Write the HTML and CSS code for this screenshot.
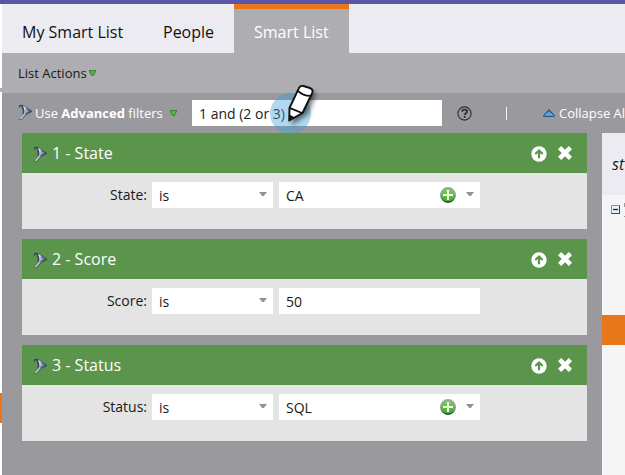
FILE: index.html
```
<!DOCTYPE html>
<html lang="en">
<head>
<meta charset="utf-8">
<title>Smart List</title>
<link rel="stylesheet" href="styles.css">
</head>
<body>
<svg class="defs" aria-hidden="true">
  <linearGradient id="steel" x1="0" y1="0" x2="1" y2=".6"><stop offset="0" stop-color="#8090a8"/><stop offset=".35" stop-color="#e4edf5"/><stop offset=".65" stop-color="#8799b3"/><stop offset="1" stop-color="#33415e"/></linearGradient>
  <linearGradient id="lime" x1="0" y1="0" x2="0" y2="1"><stop offset="0" stop-color="#7fd060"/><stop offset="1" stop-color="#35b515"/></linearGradient>
  <linearGradient id="rim" x1="0" y1="0" x2="0" y2="1"><stop offset="0" stop-color="#a0a2a4"/><stop offset=".7" stop-color="#858b8d"/><stop offset="1" stop-color="#26343f"/></linearGradient>
  <linearGradient id="sky" x1="0" y1="0" x2="0" y2="1"><stop offset="0" stop-color="#287cc4"/><stop offset="1" stop-color="#60baff"/></linearGradient>
  <symbol id="funnel" viewBox="0 0 15 17">
    <path d="M3.500 1C7 2.200 10.500 4.500 14 7.400L8.600 10.300 6.500 12.500 3 16 1.300 15.400 4.700 11.800 5.300 8.500Z" fill="url(#steel)" stroke="#2b3852" stroke-width=".7"/>
    <path d="M1.200 3.500C1.200.5 3.500.5 4.800 3.200 6 6 6 8.500 4.800 9.200" fill="none" stroke="#2b3852" stroke-width="1.100"/>
    <path d="M5.800 10.500 2.300 14.800" stroke="#dce6f1" stroke-width=".9"/>
    <path d="m8 4.500 4.600 3M7.500 9.600l4-1.700" stroke="#30405e" stroke-width=".8"/>
  </symbol>
  <symbol id="down" viewBox="0 0 7 6"><path d="M0 0h7v1.500L4.500 6h-2L0 1.500Z" fill="#3d8430"/><path d="M1 1h5L4.200 4.800H2.800Z" fill="#4fbd30"/></symbol>
  <symbol id="up-circle" viewBox="0 0 16 16"><circle cx="8" cy="8" r="7.700" fill="#fff"/><path d="m8 2.900 4.400 4.400-1.400 1.400-1.900-1.700V12.300H6.900V7L5 8.700 3.600 7.300Z" fill="#5b944b"/></symbol>
  <symbol id="cross" viewBox="0 0 14 14"><path d="m3.200 0 3.800 3.800L10.800 0 14 3.200 10.200 7 14 10.800 10.800 14 7 10.200 3.200 14 0 10.800 3.800 7 0 3.200Z" fill="#fff"/></symbol>
  <symbol id="plus" viewBox="0 0 16 16"><circle cx="8" cy="8" r="7.200" fill="url(#lime)" stroke="url(#rim)" stroke-width="1.500"/><path d="M8 3v10M3 8h10" stroke="#f4fff0" stroke-width="2"/></symbol>
</svg>
<div class="window">
  <div class="gutter"><i class="gutter-line"></i><i class="gutter-mark"></i></div>
  <div class="app">
    <nav class="tabs">
      <a class="tab tab-first">My Smart List</a>
      <a class="tab tab-people">People</a>
      <a class="tab active">Smart List</a>
    </nav>
    <div class="toolbar"><span class="actions">List Actions</span><svg class="down"><use href="#down"/></svg></div>
    <main class="workspace">
      <div class="filterbar">
        <svg class="funnel"><use href="#funnel"/></svg>
        <span class="mode">Use <b>Advanced</b> filters</span>
        <svg class="down"><use href="#down"/></svg>
        <div class="logic">1 and (2 or 3)
          <svg class="cursor" viewBox="0 0 60 58">
            <circle cx="26.500" cy="33.500" r="20.500" fill="#3d9ed9" fill-opacity=".4"/>
            <path d="M28 29 40 9l12 4-8 21-16 11Z" class="shade"/>
            <path d="M25.500 28 34.800 8.300C35.600 6.300 37.200 5.500 39.500 6l6.300 2c2.600.9 3.400 2.700 2.400 5L38.500 33 25.200 40.500Z" fill="#fff" stroke="#111" stroke-width="1.900" stroke-linejoin="round"/>
            <path d="M34 10.800c3 3.200 7.600 5 12.500 5M25.500 27.800 38 33" fill="none" stroke="#111" stroke-width="1.800"/>
            <path d="m25.200 34.500 5.300 2.800-5.300 3.200Z" fill="#111"/>
          </svg>
        </div>
        <svg class="help" viewBox="0 0 15 15"><circle cx="7.500" cy="7.500" r="6.600" fill="none" stroke="#2c2c2e" stroke-width="1.100"/><path d="M5 5.700c.2-1.500 1.200-2 2.600-2 1.500 0 2.500.7 2.500 1.900 0 1.600-2.400 1.700-2.400 3.300M7.700 10v1.700" fill="none" stroke="#2c2c2e" stroke-width="1.800"/></svg>
        <i class="divider"></i>
        <svg class="collapse" viewBox="0 0 12 8"><path d="M6 .7 11.300 6.500v.8H.7v-.8Z" fill="url(#sky)" stroke="#153e68" stroke-width="1"/></svg>
        <span class="collapse-text">Collapse All</span>
      </div>
      <div class="content">
        <div class="cards">
          <section class="card">
            <header><svg class="funnel"><use href="#funnel"/></svg><h2>1 - State</h2><svg class="up"><use href="#up-circle"/></svg><svg class="cross"><use href="#cross"/></svg></header>
            <div class="row"><label>State:</label><div class="field operator"><span>is</span><i class="caret"></i></div><div class="field value"><span>CA</span><svg class="plus"><use href="#plus"/></svg><i class="caret"></i></div></div>
          </section>
          <section class="card">
            <header><svg class="funnel"><use href="#funnel"/></svg><h2>2 - Score</h2><svg class="up"><use href="#up-circle"/></svg><svg class="cross"><use href="#cross"/></svg></header>
            <div class="row"><label>Score:</label><div class="field operator"><span>is</span><i class="caret"></i></div><div class="field value"><span>50</span></div></div>
          </section>
          <section class="card">
            <header><svg class="funnel"><use href="#funnel"/></svg><h2>3 - Status</h2><svg class="up"><use href="#up-circle"/></svg><svg class="cross"><use href="#cross"/></svg></header>
            <div class="row"><label>Status:</label><div class="field operator"><span>is</span><i class="caret"></i></div><div class="field value"><span>SQL</span><svg class="plus"><use href="#plus"/></svg><i class="caret"></i></div></div>
          </section>
        </div>
        <aside class="side">
          <div class="search">st</div>
          <div class="tree">
            <svg class="node" viewBox="0 0 14 17"><path d="M.5 4.500h8v8h-8Z" fill="#e8f0f8" stroke="#7894b5"/><path d="M8.500 4.500v8h-8" fill="none" stroke="#294767"/><path d="M2 8.500h5" stroke="#172c49" stroke-width="1.300"/><path d="M13.500 2v4m0 9v1" stroke="#999"/></svg>
          </div>
          <div class="selected"></div>
        </aside>
      </div>
    </main>
  </div>
</div>
</body>
</html>
```
FILE: styles.css
```
* { box-sizing: border-box; }
body { margin: 0; overflow: hidden; font: 14px "Open Sans", sans-serif; color: #191919; }
svg { display: block; flex: none; }
.defs { width: 0; height: 0; }
.window { display: flex; height: 475px; border-top: 4px solid #5a55a5; overflow: hidden; }
.gutter { width: 2px; flex: none; background: #fff; }
.gutter-line { display: block; height: 4px; margin-top: 84px; background: #aeadb2; }
.gutter-mark { display: block; height: 30px; margin-top: 301px; background: #e8771b; }
.app { width: 623px; flex: none; background: #9a999e; }
.tabs { display: flex; height: 49px; background: #ecebf2; font-size: 16px; }
.tab { flex: none; height: 49px; line-height: 56px; padding-left: 20px; color: #111; white-space: nowrap; }
.tab-first { width: 141px; }
.tab-people { width: 91px; }
.active { width: 115px; border-top: 5px solid #e8771b; background: #aeadb2; color: #fff; line-height: 46px; }
.toolbar { display: flex; align-items: center; height: 40px; padding-left: 16px; background: #aeadb2; font-size: 13px; }
.actions { width: 71px; white-space: nowrap; }
.down { width: 7px; height: 6px; }
.funnel { width: 15px; height: 17px; }
.filterbar { display: flex; align-items: center; height: 40px; padding-left: 16px; color: #fff; white-space: nowrap; }
.filterbar > * { flex: none; }
.filterbar .funnel { margin-top: -2px; }
.mode { width: 135px; margin-left: 2px; font-size: 13px; }
.logic { position: relative; width: 250px; height: 26px; margin-left: 15px; padding-left: 7px; background: #fff; color: #222; line-height: 27px; }
.cursor { position: absolute; left: 72px; top: -20px; width: 60px; height: 58px; }
.shade { fill: #111; opacity: .6; filter: blur(2.5px); }
.help { width: 15px; height: 15px; margin-left: 15px; }
.divider { width: 1px; height: 13px; margin: 1px 0 0 34px; background: #f5f5f5; }
.collapse { width: 12px; height: 8px; margin: -1px 0 0 36px; }
.collapse-text { margin-left: 4px; font-size: 13px; }
.content { display: flex; justify-content: space-between; padding-left: 20px; height: 342px; }
.cards { display: flex; flex-direction: column; gap: 10px; width: 565px; }
.card { height: 96px; background: #e4e4e4; }
.card header { display: flex; align-items: center; height: 40px; padding: 0 15px 0 11px; background: #5b944b; color: #fff; }
.card header .funnel { margin-top: 3px; }
h2 { flex: 1; margin: 0 0 0 4px; font-size: 16px; font-weight: 400; }
.up { width: 16px; height: 16px; margin: 1px 11.500px 0 0; }
.cross { width: 14px; height: 14px; }
.row { display: flex; padding-top: 9px; height: 56px; }
label { width: 125px; margin-right: 5px; line-height: 26px; text-align: right; }
.field { display: flex; align-items: center; height: 26px; padding: 1px 6px 0 7px; background: #fff; }
.field span { flex: 1; }
.operator { width: 121px; margin-right: 6px; }
.value { width: 201px; }
.caret { width: 8px; height: 4px; margin-bottom: 3px; background: #929292; clip-path: polygon(0 0, 100% 0, 60% 100%, 40% 100%); }
.plus { width: 16px; height: 16px; margin: -1px 10px 0 0; }
.side { width: 23px; height: 342px; background: #f5f5f5; overflow: hidden; }
.search { height: 62px; padding-left: 10px; background: #ecebf2; font-size: 16px; font-style: italic; line-height: 62px; }
.tree { height: 120px; padding: 6px 0 0 9px; }
.node { width: 14px; height: 17px; }
.selected { height: 30px; background: #e8771b; }
```
